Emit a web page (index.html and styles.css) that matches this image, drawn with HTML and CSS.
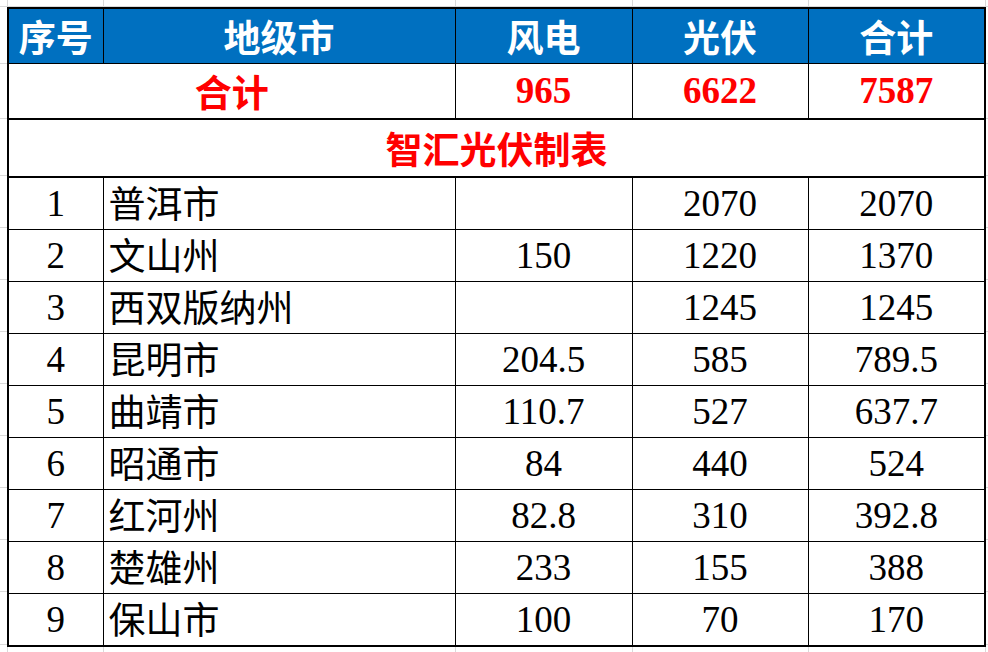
FILE: index.html
```html
<!DOCTYPE html>
<html lang="zh-CN">
<head>
<meta charset="utf-8">
<title>光伏风电汇总表</title>
<link rel="stylesheet" href="styles.css">
</head>
<body>
<div class="sheet">
  <table class="report">
    <colgroup>
      <col class="c-idx">
      <col class="c-city">
      <col class="c-wind">
      <col class="c-pv">
      <col class="c-sum">
    </colgroup>
    <thead>
      <tr class="head">
        <th>序号</th>
        <th>地级市</th>
        <th>风电</th>
        <th>光伏</th>
        <th>合计</th>
      </tr>
    </thead>
    <tbody>
      <tr class="total">
        <td colspan="2" class="total-label">合计</td>
        <td>965</td>
        <td>6622</td>
        <td>7587</td>
      </tr>
      <tr class="caption">
        <td colspan="5">智汇光伏制表</td>
      </tr>
      <tr class="row"><td>1</td><td class="city">普洱市</td><td></td><td>2070</td><td>2070</td></tr>
      <tr class="row"><td>2</td><td class="city">文山州</td><td>150</td><td>1220</td><td>1370</td></tr>
      <tr class="row"><td>3</td><td class="city">西双版纳州</td><td></td><td>1245</td><td>1245</td></tr>
      <tr class="row"><td>4</td><td class="city">昆明市</td><td>204.5</td><td>585</td><td>789.5</td></tr>
      <tr class="row"><td>5</td><td class="city">曲靖市</td><td>110.7</td><td>527</td><td>637.7</td></tr>
      <tr class="row"><td>6</td><td class="city">昭通市</td><td>84</td><td>440</td><td>524</td></tr>
      <tr class="row"><td>7</td><td class="city">红河州</td><td>82.8</td><td>310</td><td>392.8</td></tr>
      <tr class="row"><td>8</td><td class="city">楚雄州</td><td>233</td><td>155</td><td>388</td></tr>
      <tr class="row"><td>9</td><td class="city">保山市</td><td>100</td><td>70</td><td>170</td></tr>
    </tbody>
  </table>
</div>
</body>
</html>
```
FILE: styles.css
```css
html, body {
  margin: 0;
  padding: 0;
  background: #ffffff;
}

.sheet {
  box-sizing: border-box;
  width: 988px;
  height: 652px;
  padding: 7px 0 0 7px;
  background-color: #ffffff;
  background-repeat: no-repeat;
  background-image:
    linear-gradient(#d9d9d9, #d9d9d9),
    linear-gradient(#d9d9d9, #d9d9d9),
    linear-gradient(#d9d9d9, #d9d9d9),
    linear-gradient(#d9d9d9, #d9d9d9),
    linear-gradient(#d9d9d9, #d9d9d9),
    linear-gradient(#d9d9d9, #d9d9d9),
    linear-gradient(#d9d9d9, #d9d9d9),
    linear-gradient(#d9d9d9, #d9d9d9),
    linear-gradient(#d9d9d9, #d9d9d9),
    linear-gradient(#d9d9d9, #d9d9d9),
    linear-gradient(#d9d9d9, #d9d9d9),
    linear-gradient(#d9d9d9, #d9d9d9),
    linear-gradient(#d9d9d9, #d9d9d9),
    linear-gradient(#d9d9d9, #d9d9d9),
    linear-gradient(#d9d9d9, #d9d9d9),
    linear-gradient(#d9d9d9, #d9d9d9),
    linear-gradient(#d9d9d9, #d9d9d9),
    linear-gradient(#d9d9d9, #d9d9d9),
    linear-gradient(#d9d9d9, #d9d9d9);
  background-size:
    1px 100%, 1px 100%, 1px 100%, 1px 100%, 1px 100%, 1px 100%,
    100% 1px, 100% 1px, 100% 1px, 100% 1px, 100% 1px, 100% 1px, 100% 1px,
    100% 1px, 100% 1px, 100% 1px, 100% 1px, 100% 1px, 100% 1px;
  background-position:
    7px 0, 103px 0, 455px 0, 632px 0, 808px 0, 985px 0,
    0 6px, 0 63px, 0 118px, 0 175px, 0 227px, 0 279px, 0 331px,
    0 383px, 0 435px, 0 487px, 0 539px, 0 591px, 0 644px;
}

.report {
  border-collapse: collapse;
  table-layout: fixed;
  width: 979px;
  border: 2px solid #000000;
  background: #ffffff;
}

.c-idx { width: 95px; }
.c-city { width: 352px; }
.c-wind { width: 177px; }
.c-pv { width: 176px; }
.c-sum { width: 177px; }

.report th,
.report td {
  padding: 0;
  border: 1px solid #000000;
  text-align: center;
  vertical-align: middle;
  font-size: 37px;
  line-height: 40px;
  white-space: nowrap;
}

.head th {
  height: 54px;
  background: #0070c0;
  color: #ffffff;
  font-family: "Noto Sans CJK SC", "Noto Sans", sans-serif;
  font-weight: 700;
}

.total td {
  height: 54px;
  border-bottom: 2px solid #000000;
  color: #ff0000;
  font-family: "Liberation Serif", "Noto Sans CJK SC", serif;
  font-weight: 700;
}

.total .total-label {
  font-family: "Noto Sans CJK SC", sans-serif;
}

.caption td {
  height: 56px;
  border-bottom: 2px solid #000000;
  color: #ff0000;
  font-family: "Noto Sans CJK SC", sans-serif;
  font-weight: 700;
}

.row td {
  height: 51px;
  color: #000000;
  font-family: "Liberation Serif", "Noto Sans CJK SC", serif;
  font-weight: 400;
}

.row .city {
  text-align: left;
  padding-left: 5px;
  padding-bottom: 4px;
  box-sizing: border-box;
  font-family: "Noto Sans CJK SC", sans-serif;
}
```
